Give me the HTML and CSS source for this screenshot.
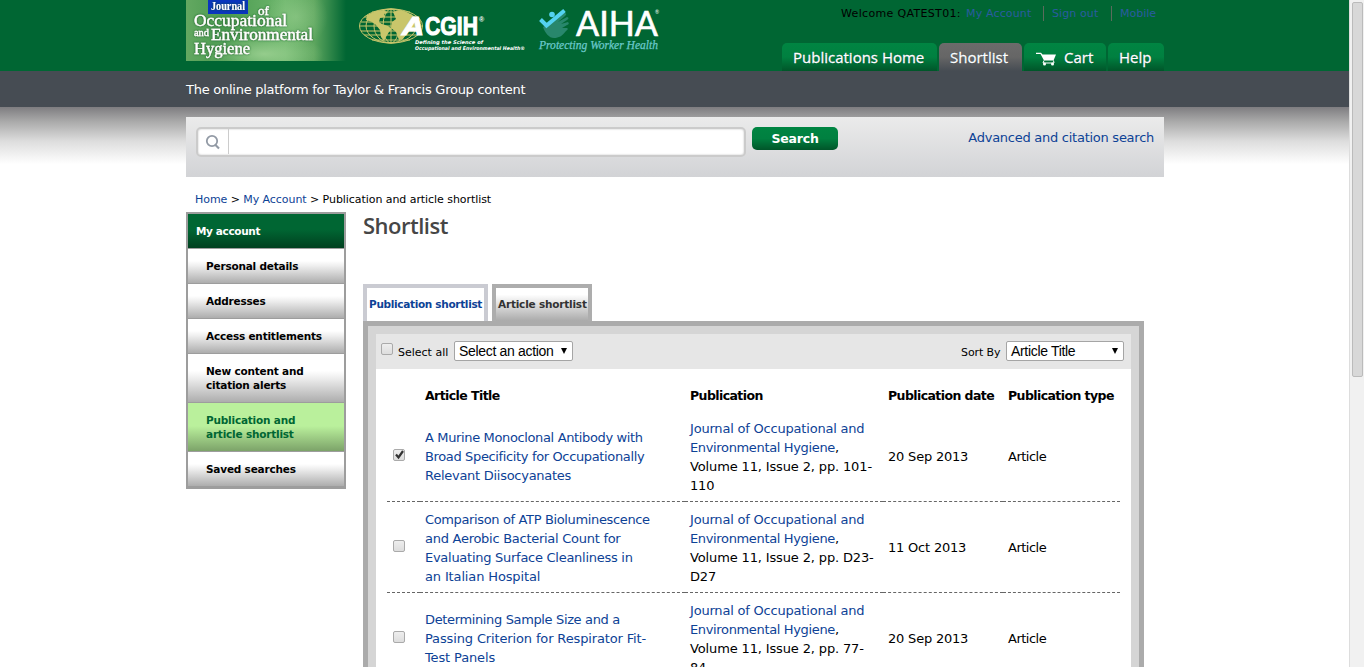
FILE: index.html
```html
<!DOCTYPE html>
<html lang="en">
<head>
<meta charset="utf-8">
<title>Shortlist</title>
<link rel="stylesheet" href="styles.css">
</head>
<body>
<div class="page">
<div class="content">
<header class="header"><div class="wrap head-row">
<svg class="logos" width="490" height="71" viewBox="0 0 490 71">
<defs>
<linearGradient id="joeh" x1="0" x2="1" y1="0" y2="0"><stop offset="0" stop-color="#63a861"/><stop offset=".25" stop-color="#4b9a50"/><stop offset=".62" stop-color="#6db66c"/><stop offset=".8" stop-color="#5da65e"/><stop offset="1" stop-color="#006633"/></linearGradient>
<radialGradient id="glow"><stop offset="0" stop-color="#a6d79a" stop-opacity=".75"/><stop offset="1" stop-color="#a6d79a" stop-opacity="0"/></radialGradient>
<filter id="shade" x="-10%" y="-30%" width="120%" height="160%"><feDropShadow dx="0" dy="0" stdDeviation="1" flood-color="#125526"/></filter>
<clipPath id="badge"><rect width="160" height="61"/></clipPath>
</defs>
<g clip-path="url(#badge)"><rect width="160" height="61" fill="url(#joeh)"/>
<ellipse cx="78" cy="54" rx="60" ry="20" fill="url(#glow)"/><ellipse cx="110" cy="17" rx="32" ry="30" fill="url(#glow)" opacity=".6"/></g>
<rect x="22" width="40" height="14" fill="#0a35bd"/>
<g class="serif" filter="url(#shade)" stroke="#fff" stroke-width=".3">
<text x="25" y="10" font-size="11.500" font-weight="bold" textLength="34" lengthAdjust="spacingAndGlyphs" stroke="none">Journal</text>
<text x="72" y="15" font-size="13" textLength="11" lengthAdjust="spacingAndGlyphs">of</text>
<text x="8" y="26" font-size="16" textLength="93" lengthAdjust="spacingAndGlyphs">Occupational</text>
<text x="8" y="36" font-size="10" textLength="15" lengthAdjust="spacingAndGlyphs">and</text>
<text x="25" y="40" font-size="16" textLength="102" lengthAdjust="spacingAndGlyphs">Environmental</text>
<text x="8" y="54" font-size="16" textLength="56" lengthAdjust="spacingAndGlyphs">Hygiene</text>
</g>
<g stroke="#c9c66b" fill="none" stroke-width="1">
<ellipse cx="205" cy="26" rx="31.5" ry="17"/><ellipse cx="205" cy="26" rx="25" ry="17"/><ellipse cx="205" cy="26" rx="17" ry="17"/><ellipse cx="205" cy="26" rx="8" ry="17"/><path d="M205 9v34M174 26h63M178 17h54M178 35h54M186 12h38M186 40h38M175 22h60M175 31h60"/></g>
<path fill="#c9c66b" d="M181 15l9-4 8-1 4 3-4 1 1 3-5 1-1 4 3 2 6 2 4 3-3 3-3 5-2 4-3-4-1-7-4-5-4-3-6-2zM207 12l7-2 11 4 7 5 3 6-5 1-3 4-3-5-4 2 1 6-4 6-4 1-3-8-5-4 1-6 4-3z"/>
<g class="sans">
<text x="216" y="35" font-size="26" font-weight="bold" font-style="italic" stroke="#fff" stroke-width="1.200" textLength="22" lengthAdjust="spacingAndGlyphs">A</text>
<text x="239" y="35" font-size="25" font-weight="bold" stroke="#fff" stroke-width="1" textLength="53" lengthAdjust="spacingAndGlyphs">CGIH</text>
<text x="293" y="22" font-size="7" font-weight="bold">®</text>
<g class="tiny" font-weight="bold" font-style="italic" font-size="5"><text x="229" y="44" textLength="68" lengthAdjust="spacingAndGlyphs">Defining the Science of</text><text x="229" y="49.500" textLength="110" lengthAdjust="spacingAndGlyphs">Occupational and Environmental Health®</text></g>
</g>
<path d="M357 27l21-14q4 0 1 3l-7 6 9-5q3 1 0 3l-6 4 7-2q2 2-1 3l-5 3 5 0q2 1-1 3c-4 5-7 7-12 7-5 0-9-5-11-11z" fill="#28876c"/>
<circle cx="366" cy="14.500" r="2.800" fill="#54d2f0"/><path d="M354.500 19.500l6 6 18-15" fill="none" stroke="#54d2f0" stroke-width="4"/>
<text class="lato" x="390" y="36" font-size="34" stroke="#fff" stroke-width=".6" textLength="82" lengthAdjust="spacingAndGlyphs">AIHA</text>
<text class="lato" x="469" y="14" font-size="5">®</text>
<text class="serif protect" x="353" y="49" font-size="12" font-style="italic" stroke="#6bc9cb" stroke-width=".25" textLength="119" lengthAdjust="spacingAndGlyphs">Protecting Worker Health</text>
</svg>
<div class="head-right">
<div class="welcome"><span>Welcome QATEST01:</span><a class="acct">My Account</a><a class="sep out">Sign out</a><a class="sep mob">Mobile</a></div>
<nav class="nav"><a class="n1"><span>Publications Home</span></a><a class="n2 on"><span>Shortlist</span></a><a class="n3"><svg width="21" height="14" viewBox="0 0 21 14"><path d="M0 .8h5l1.500 1.700H20l-2.500 6H8L4.500 2H0z" fill="#fff"/><path d="M8 8.500l-1 2.500h11l-.5-2.500" fill="none" stroke="#fff"/><circle cx="8.500" cy="12" r="1.500" fill="#fff"/><circle cx="16.500" cy="12" r="1.500" fill="#fff"/></svg><span>Cart</span></a><a class="n4"><span>Help</span></a></nav>
</div></div></header>
<div class="tagbar"><div class="wrap"><span class="tag">The online platform for Taylor &amp; Francis Group content</span></div></div>
<div class="fade"><div class="wrap">
<section class="search"><div class="field"><i class="glass"><svg width="16" height="17" viewBox="0 0 16 17"><circle cx="7" cy="7" r="5.200" fill="none" stroke="#929aa5" stroke-width="1.800"/><path d="M10 10.500l4 4" stroke="#929aa5" stroke-width="2.200"/></svg></i></div><button class="go">Search</button><a class="adv">Advanced and citation search</a></section>
<div class="crumbs"><a>Home</a> &gt; <a>My Account</a> &gt; Publication and article shortlist</div>
<div class="columns">
<aside class="side"><div class="me">My account</div><div>Personal details</div><div>Addresses</div><div>Access entitlements</div><div>New content and<br>citation alerts</div><div class="cur">Publication and<br>article shortlist</div><div>Saved searches</div></aside>
<main class="main">
<h1><span>Shortlist</span></h1>
<div class="tabs"><a class="tab t1">Publication shortlist</a><a class="tab t2">Article shortlist</a></div>
<div class="panel">
<div class="tools"><i class="box"></i><span class="lab all">Select all</span><span class="sel s1"><span>Select an action</span><b></b></span><span class="lab sort">Sort By</span><span class="sel s2"><span>Article Title</span><b></b></span></div>
<div class="list"><table>
<colgroup><col class="c1"><col class="c2"><col class="c3"><col class="c4"><col class="c5"></colgroup>
<tr><th></th><th>Article Title</th><th>Publication</th><th>Publication date</th><th>Publication type</th></tr>
<tr class="first"><td class="pick"><i class="box"><svg width="11" height="11" viewBox="0 0 11 11"><path d="M2 5.500l2.500 3L9 2" fill="none" stroke="#333" stroke-width="2.200"/></svg></i></td><td class="title"><a>A Murine Monoclonal Antibody with<br>Broad Specificity for Occupationally<br><span class="loose">Relevant Diisocyanates</span></a></td><td class="pub"><a>Journal of Occupational and<br><span class="env">Environmental Hygiene</span></a>,<br><span class="vol">Volume 11, Issue 2, pp. 101-</span><br>110</td><td class="date">20 Sep 2013</td><td class="kind">Article</td></tr>
<tr><td class="pick"><i class="box"></i></td><td class="title"><a>Comparison of ATP Bioluminescence<br><span class="loose">and Aerobic Bacterial Count for</span><br><span class="loose">Evaluating Surface Cleanliness in</span><br><span class="wide">an Italian Hospital</span></a></td><td class="pub"><a>Journal of Occupational and<br><span class="env">Environmental Hygiene</span></a>,<br><span class="vol">Volume 11, Issue 2, pp. D23-</span><br>D27</td><td class="date">11 Oct 2013</td><td class="kind">Article</td></tr>
<tr><td class="pick"><i class="box"></i></td><td class="title"><a>Determining Sample Size and a<br><span class="wide">Passing Criterion for Respirator Fit-</span><br><span class="wide">Test Panels</span></a></td><td class="pub"><a>Journal of Occupational and<br><span class="env">Environmental Hygiene</span></a>,<br><span class="vol">Volume 11, Issue 2, pp. 77-</span><br>84</td><td class="date">20 Sep 2013</td><td class="kind">Article</td></tr>
</table></div>
</div>
</main></div>
</div></div>
</div>
<div class="scroll"><div class="thumb"></div></div>
</div>
</body>
</html>
```
FILE: styles.css
```css
* { box-sizing: border-box; }
body { margin: 0; height: 667px; overflow: hidden; background: #fff; color: #000; font-family: "DejaVu Sans", sans-serif; font-size: 13px; }
a { color: #0d4296; text-decoration: none; }
.page { display: flex; height: 667px; overflow: hidden; }
.content { width: 1349px; flex: none; }
.wrap { width: 978px; margin-left: 186px; }
.header { height: 71px; background: #006633; }
.head-row { display: flex; justify-content: space-between; }
.logos { display: block; flex: none; fill: #fff; }
.serif { font-family: "Liberation Serif", serif; fill: #fff; }
.sans { font-family: "Liberation Sans", sans-serif; }
.tiny { font-family: "DejaVu Sans", sans-serif; }
.lato { font-family: Lato, sans-serif; }
.protect { fill: #6bc9cb; }
.head-right { width: 384px; display: flex; flex-direction: column; justify-content: space-between; height: 71px; }
.welcome { display: flex; padding: 6px 0 0 61px; line-height: 15px; font-size: 11px; white-space: nowrap; }
.welcome span { width: 125px; letter-spacing: .33px; }
.welcome a { color: #2a5ca0; }
.acct { width: 77px; letter-spacing: .15px; }
.sep { border-left: 1px solid #5a6b5c; padding-left: 8px; }
.out { width: 68px; letter-spacing: .1px; }
.nav { display: flex; gap: 2px; padding-left: 2px; }
.nav a { height: 28px; padding-left: 11px; border-radius: 5px 5px 0 0; background: linear-gradient(#008542, #008040 50%, #005529); color: #fff; font: 15px/29px "Open Sans", sans-serif; -webkit-text-stroke: .3px #fff; white-space: nowrap; display: flex; text-shadow: 0 0 1px #023; }
.nav .on { background: linear-gradient(#6b6b6b, #666 50%, #464c53); }
.n1 { width: 155px; } .n2 { width: 83px; } .n3 { width: 82px; } .n4 { width: 56px; }
.n3 svg { margin: 9px 7px 0 1px; flex: none; }
.tagbar { height: 36px; background: #464c53; color: #fff; line-height: 37px; white-space: nowrap; letter-spacing: -.26px; }
.fade { background: linear-gradient(#7e7d80, #a9a9a9 25%, #ddd 60%, #fff) 0 0 / 100% 57px no-repeat; padding-top: 10px; }
.search { height: 60px; background: linear-gradient(#ebebeb, #d2d3d6); display: flex; padding: 10px 10px 0 10px; align-items: flex-start; }
.field { width: 550px; height: 30px; border: 2px solid #cbcbcb; border-radius: 5px; background: #fff; box-shadow: inset 0 0 2px #bbb; }
.glass { display: block; width: 31px; height: 25px; border-right: 1px solid #ccc; padding: 5px 0 0 7px; }
.glass svg { display: block; }
.go { width: 86px; height: 23px; margin: 0 0 0 6px; padding: 0; border: 0; border-radius: 5px; background: linear-gradient(#008542, #008040 50%, #005529); color: #fff; font: bold 12.500px "DejaVu Sans", sans-serif; letter-spacing: -.2px; }
.adv { margin-left: auto; line-height: 21px; white-space: nowrap; letter-spacing: -.26px; }
.crumbs { height: 35px; padding: 15px 0 0 9px; line-height: 15px; font-size: 11px; white-space: nowrap; letter-spacing: -.06px; }
.columns { display: flex; }
.side { width: 160px; height: 277px; border: 2px solid #9d9d9d; font-weight: bold; font-size: 10.500px; letter-spacing: -.2px; line-height: 14px; flex: none; white-space: nowrap; display: flex; flex-direction: column; }
.side div { border-bottom: 1px solid #9d9d9d; padding: 10px 0 10px 18px; background: linear-gradient(#fff 35%, #eee 50%, #adadad); }
.side div:last-child { flex: 1; }
.side .me { background: linear-gradient(#006633 45%, #00401f); color: #fff; padding: 10px 0 10px 8px; letter-spacing: -.36px; }
.side .cur { background: linear-gradient(#baf09c 48%, #7ca369); color: #006633; }
.main { margin-left: 17px; width: 781px; }
h1 { margin: 0; height: 72px; color: #464646; font: 600 22px/27px "Open Sans", sans-serif; letter-spacing: -.5px; }
.tabs { display: flex; gap: 4px; height: 37px; }
.tab { height: 37px; border: 4px solid #cacbd2; border-bottom: 0; font-weight: bold; font-size: 10.500px; letter-spacing: -.32px; line-height: 33px; white-space: nowrap; padding-left: 2px; }
.t1 { width: 125px; } .t2 { width: 100px; border-color: #adadad; background: linear-gradient(#fff 20%, #aaa); color: #333; letter-spacing: -.2px; }
.panel { border: 5px solid #ababab; background: #d5d5d5; padding: 8px; }
.tools { height: 35px; background: #e6e6e6; display: flex; padding: 7px 7px 0 5px; }
.box { display: block; width: 12px; height: 12px; border: 1px solid #aaa; border-radius: 2px; background: linear-gradient(#eee, #ddd); flex: none; }
.box svg { display: block; margin: -1px 0 0 0; }
.tools .box { margin-top: 2px; }
.lab { font-size: 11px; line-height: 24px; white-space: nowrap; }
.all { width: 56px; margin-left: 5px; }
.sort { margin-left: auto; width: 45px; letter-spacing: -.1px; }
.sel { height: 20px; border: 1px solid #a5a5a5; border-radius: 2px; background: #fff; font: 14px/18px "Liberation Sans", sans-serif; letter-spacing: -.32px; padding: 0 5px 0 4px; display: flex; justify-content: space-between; align-items: center; white-space: nowrap; }
.sel b { border: 3px solid transparent; border-top: 6px solid #000; border-bottom: 0; }
.s1 { width: 119px; } .s2 { width: 118px; }
.list { background: #fff; padding: 7px 11px 0; height: 400px; }
table { border-collapse: collapse; table-layout: fixed; width: 733px; line-height: 19px; white-space: nowrap; }
.c1 { width: 33px; } .c2 { width: 265px; } .c3 { width: 198px; } .c4 { width: 120px; } .c5 { width: 117px; }
th { height: 34px; padding: 4px 0 0 5px; text-align: left; vertical-align: middle; font-size: 12.500px; letter-spacing: -.58px; }
td { height: 91px; padding: 8px 0 6px 5px; border-bottom: 1px dashed #666; }
td.pick { padding: 5px 0 6px 6px; }
.first .pub { padding: 9px 0 5px 5px; }
.title { letter-spacing: -.36px; }
.loose { letter-spacing: -.27px; }
.wide { letter-spacing: -.14px; }
.pub { letter-spacing: -.2px; }
.env { letter-spacing: -.35px; }
.vol { letter-spacing: -.14px; }
.date { letter-spacing: -.2px; }
.kind { letter-spacing: -.5px; }
.scroll { width: 15px; background: #f1f1f1; border-left: 1px solid #ddd; padding: 2px 1px 0 2px; }
.thumb { width: 11px; height: 375px; border: 1px solid #bbb; border-radius: 2px; background: #d8d8d8; }
```
